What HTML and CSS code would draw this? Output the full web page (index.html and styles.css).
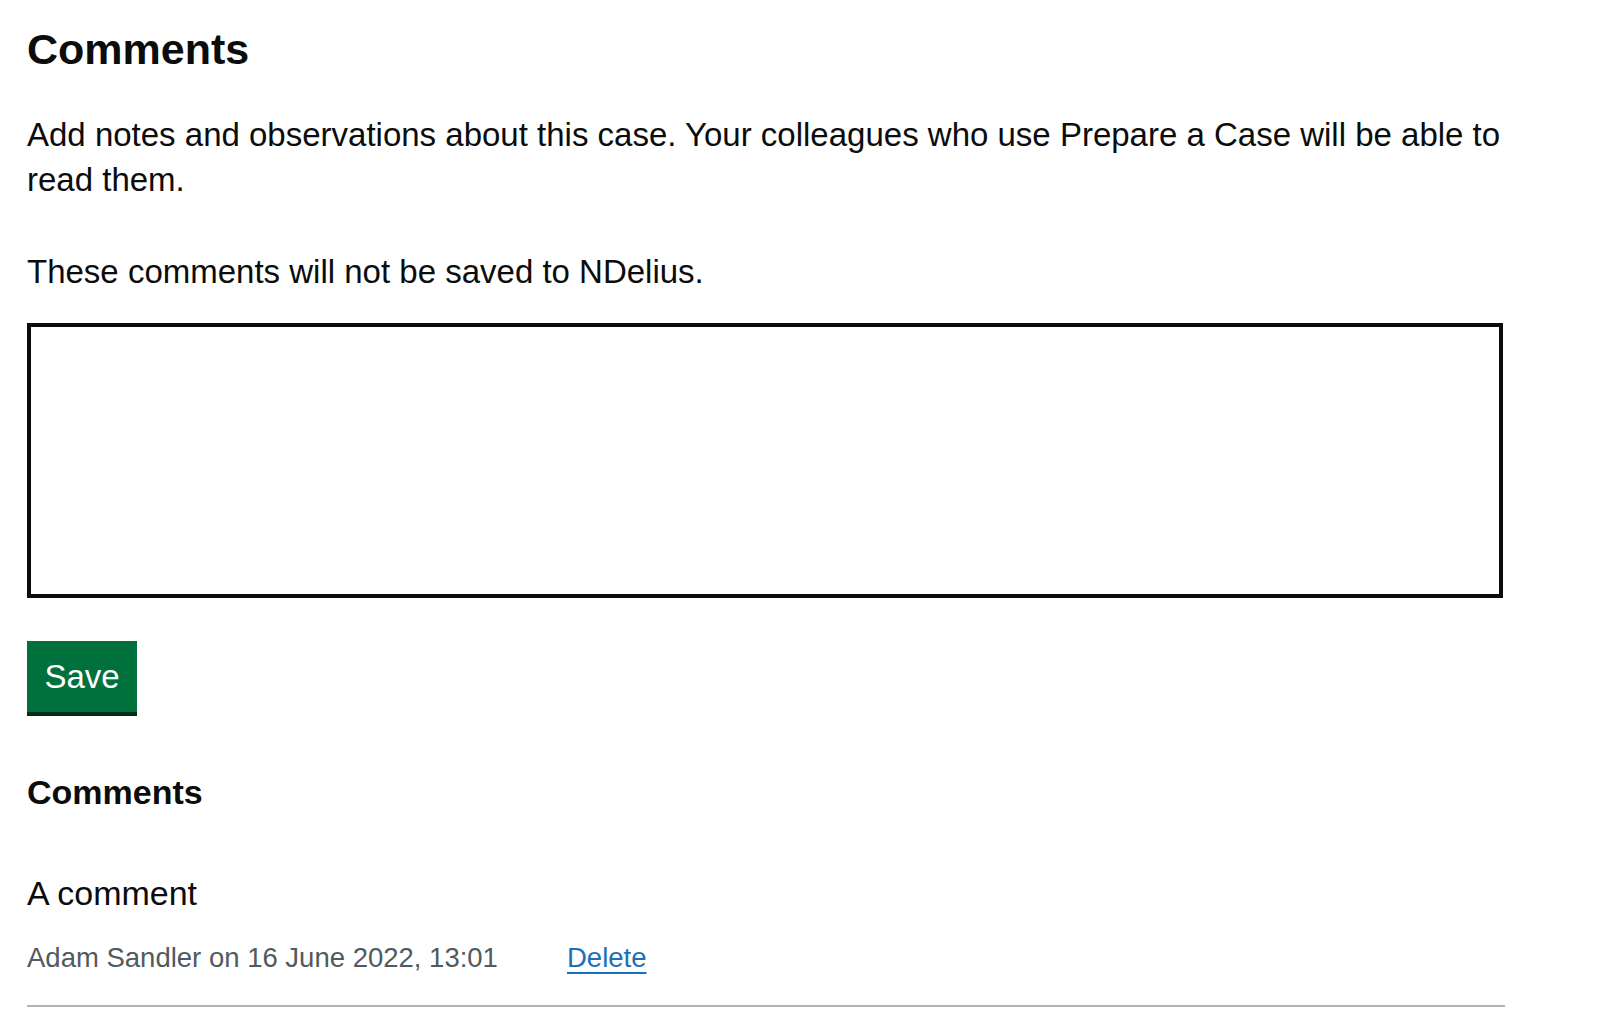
FILE: index.html
```html
<!DOCTYPE html>
<html lang="en">
<head>
<meta charset="utf-8">
<title>Comments</title>
<link rel="stylesheet" href="styles.css">
</head>
<body>
<main class="page">
  <h1 class="heading-m">Comments</h1>
  <p class="body lead">Add notes and observations about this case. Your colleagues who use Prepare a Case will be able to read them.</p>
  <p class="body hint">These comments will not be saved to NDelius.</p>
  <form class="comment-form">
    <textarea class="textarea" aria-label="Comment"></textarea>
    <button type="button" class="button">Save</button>
  </form>
  <h2 class="heading-s">Comments</h2>
  <div class="comment">
    <p class="body comment-text">A comment</p>
    <div class="comment-meta">
      <span class="meta">Adam Sandler on 16 June 2022, 13:01</span>
      <a class="link" href="#">Delete</a>
    </div>
  </div>
</main>
</body>
</html>
```

FILE: styles.css
```css
html, body {
  margin: 0;
  padding: 0;
  background: #ffffff;
}

body {
  font-family: "Liberation Sans", Arial, sans-serif;
  color: #0b0c0c;
}

.page {
  width: 1478px;
  padding: 24px 0 0 27px;
}

.heading-m {
  margin: 0 0 38px;
  font-size: 43px;
  line-height: 50px;
  font-weight: 700;
}

.body {
  margin: 0;
  font-size: 33px;
  line-height: 45px;
}

.lead {
  margin-bottom: 47px;
}

.hint {
  margin-bottom: 29px;
}

.comment-form {
  display: flex;
  flex-direction: column;
  align-items: flex-start;
  gap: 43px;
  margin: 0;
}

.textarea {
  display: block;
  box-sizing: border-box;
  width: calc(100% - 2px);
  height: 275px;
  margin: 0;
  padding: 9px;
  border: 4px solid #0b0c0c;
  border-radius: 0;
  background: #ffffff;
  font-family: inherit;
  font-size: 33px;
  resize: none;
  outline: none;
}

.button {
  box-sizing: border-box;
  height: 71px;
  margin: 0;
  padding: 19px 17.5px;
  border: 0;
  border-radius: 0;
  background: #00703c;
  color: #ffffff;
  font-family: inherit;
  font-size: 33px;
  line-height: 33px;
  box-shadow: 0 4px 0 #002d18;
  cursor: pointer;
}

.heading-s {
  margin: 59px 0 0;
  font-size: 34px;
  line-height: 43.5px;
  font-weight: 700;
}

.comment {
  margin-top: 56px;
  padding-bottom: 30px;
  border-bottom: 2px solid #b1b4b6;
}

.comment-text {
  margin-bottom: 24px;
  font-size: 34px;
}

.comment-meta {
  display: grid;
  grid-template-columns: 540px auto;
  align-items: baseline;
  font-size: 27.5px;
  line-height: 35px;
}

.meta {
  color: #505a5f;
}

.link {
  justify-self: start;
  color: #1d70b8;
  text-decoration: underline;
  text-decoration-thickness: 2px;
  text-underline-offset: 5px;
}
```
